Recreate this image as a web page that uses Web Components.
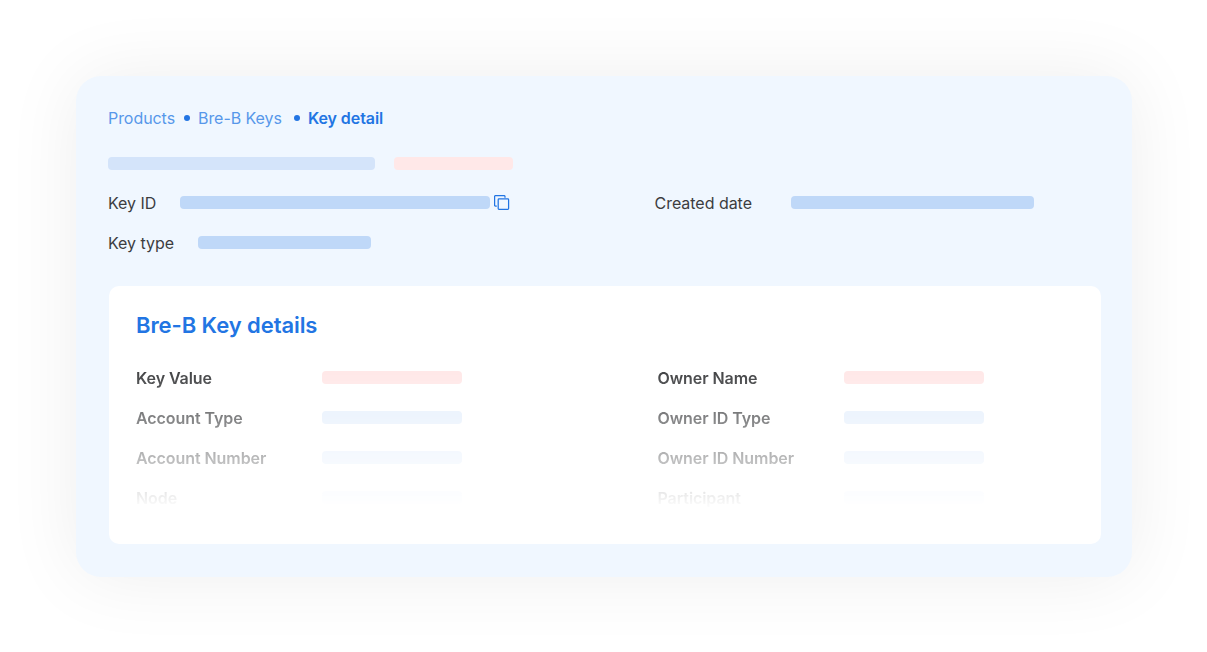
<!DOCTYPE html>
<html lang="en">
<head>
<meta charset="utf-8">
<title>Key detail</title>
<style>
    body {
        margin: 0;
        background: #fff;
        font-family: Inter, "Liberation Sans", sans-serif;
        font-size: 16px;
        line-height: 20px;
        color: #3c3d3f;
    }
</style>
</head>
<body>
<key-page></key-page>
<script>
class SkeletonBar extends HTMLElement {
    constructor() {
        super();
        this.attachShadow({ mode: 'open' });
        this.shadowRoot.innerHTML = `
            <style>
                :host {
                    display: block;
                    flex: none;
                    width: var(--bar-width, 140px);
                    height: 13px;
                    border-radius: 4px;
                    background: #bfd8f8;
                }
                :host([tone="soft"]) { background: #d4e4fa; }
                :host([tone="pale"]) { background: #e5effc; }
                :host([tone="pink"]) { background: #ffe8e8; }
            </style>
        `;
    }
}

class BreadCrumbs extends HTMLElement {
    constructor() {
        super();
        this.attachShadow({ mode: 'open' });
        this.shadowRoot.innerHTML = `
            <style>
                :host {
                    display: flex;
                    align-items: center;
                    height: 20px;
                    color: #5797ea;
                    letter-spacing: -0.06px;
                }
                i {
                    width: 6px;
                    height: 6px;
                    margin: 0 8px 0 9px;
                    border-radius: 50%;
                    background: #2275e3;
                }
                i.last { margin: 0 8px 0 12px; }
                b { font-weight: 600; color: #2275e3; }
            </style>
            <span><slot name="root"></slot></span><i></i>
            <span><slot name="section"></slot></span><i class="last"></i>
            <b><slot name="current"></slot></b>
        `;
    }
}

class CopyIcon extends HTMLElement {
    constructor() {
        super();
        this.attachShadow({ mode: 'open' });
        this.shadowRoot.innerHTML = `
            <style>
                :host { display: block; width: 16px; height: 16px; margin-left: 4px; }
                svg { display: block; }
            </style>
            <svg width="16" height="16" viewBox="0 0 16 16" fill="none" stroke="#2275e3" stroke-width="1.25">
                <path d="M2.8 11H1.5Q.6 11 .6 10.1V1.5Q.6 .6 1.5 .6H10.1Q11 .6 11 1.5V2.8"/>
                <rect x="4.2" y="3.9" width="10.4" height="10.5" rx=".8"/>
            </svg>
        `;
    }
}

class SummaryField extends HTMLElement {
    constructor() {
        super();
        this.attachShadow({ mode: 'open' });
        this.shadowRoot.innerHTML = `
            <style>
                :host {
                    display: flex;
                    align-items: center;
                    height: 40px;
                }
                span { width: var(--label-width); letter-spacing: -0.03px; }
                ::slotted(skeleton-bar) { margin-bottom: 1px; }
            </style>
            <span><slot name="label"></slot></span>
            <slot></slot>
        `;
    }
}

class DetailRow extends HTMLElement {
    constructor() {
        super();
        this.attachShadow({ mode: 'open' });
    }

    connectedCallback() {
        this.shadowRoot.innerHTML = `
            <style>
                :host {
                    display: flex;
                    align-items: center;
                    height: 40px;
                    font-weight: 600;
                    letter-spacing: -0.07px;
                    color: #434446;
                }
                span { width: 186px; }
                skeleton-bar { margin-bottom: 1px; }
            </style>
            <span><slot></slot></span>
            <skeleton-bar tone="${this.getAttribute('tone') || 'pale'}"></skeleton-bar>
        `;
    }
}

class DetailsCard extends HTMLElement {
    constructor() {
        super();
        this.attachShadow({ mode: 'open' });
        this.shadowRoot.innerHTML = `
            <style>
                :host {
                    display: block;
                    box-sizing: border-box;
                    height: 258px;
                    padding: 24px 27px 0;
                    border-radius: 10px;
                    background: #fff;
                }
                h2 {
                    margin: 0 0 18px;
                    font-size: 22px;
                    line-height: 30px;
                    font-weight: 600;
                    letter-spacing: -0.07px;
                    color: #2275e3;
                }
                /* rows fade out towards the bottom of the card */
                .rows {
                    display: grid;
                    grid-template-columns: 521.5px 1fr;
                    height: 160px;
                    -webkit-mask-image: linear-gradient(#000 14px, transparent 151px);
                    mask-image: linear-gradient(#000 14px, transparent 151px);
                }
            </style>
            <h2><slot name="title"></slot></h2>
            <div class="rows">
                <div><slot name="account"></slot></div>
                <div><slot name="owner"></slot></div>
            </div>
        `;
    }
}

class KeyPage extends HTMLElement {
    constructor() {
        super();
        this.attachShadow({ mode: 'open' });
        this.shadowRoot.innerHTML = `
            <style>
                :host {
                    display: block;
                    box-sizing: border-box;
                    height: 652px;
                    padding: 76px 75px 0 76px;
                    overflow: hidden;
                }
                main {
                    box-sizing: border-box;
                    height: 501px;
                    padding: 32px 31px 0 32px;
                    border-radius: 25px;
                    background: #f0f7ff;
                    box-shadow: 0 0 76px rgba(0, 0, 0, 0.07);
                }
                .heading {
                    display: flex;
                    gap: 19.5px;
                    margin: 29px 0 13px;
                }
                .summary {
                    display: grid;
                    grid-template-columns: 546.5px 1fr;
                    margin-bottom: 23px;
                }
                details-card { margin-left: 1px; }
            </style>
            <main>
                <bread-crumbs>
                    <span slot="root">Products</span>
                    <span slot="section">Bre-B Keys</span>
                    <span slot="current">Key detail</span>
                </bread-crumbs>
                <div class="heading">
                    <skeleton-bar tone="soft" style="--bar-width: 266.5px"></skeleton-bar>
                    <skeleton-bar tone="pink" style="--bar-width: 119px"></skeleton-bar>
                </div>
                <div class="summary">
                    <summary-field style="--label-width: 72px">
                        <span slot="label">Key ID</span>
                        <skeleton-bar style="--bar-width: 310px"></skeleton-bar>
                        <copy-icon></copy-icon>
                    </summary-field>
                    <summary-field style="--label-width: 136.5px">
                        <span slot="label">Created date</span>
                        <skeleton-bar style="--bar-width: 242.5px"></skeleton-bar>
                    </summary-field>
                    <summary-field style="--label-width: 90px">
                        <span slot="label">Key type</span>
                        <skeleton-bar style="--bar-width: 172.5px"></skeleton-bar>
                    </summary-field>
                </div>
                <details-card>
                    <span slot="title">Bre-B Key details</span>
                    <detail-row slot="account" tone="pink">Key Value</detail-row>
                    <detail-row slot="account">Account Type</detail-row>
                    <detail-row slot="account">Account Number</detail-row>
                    <detail-row slot="account">Node</detail-row>
                    <detail-row slot="owner" tone="pink">Owner Name</detail-row>
                    <detail-row slot="owner">Owner ID Type</detail-row>
                    <detail-row slot="owner">Owner ID Number</detail-row>
                    <detail-row slot="owner">Participant</detail-row>
                </details-card>
            </main>
        `;
    }
}

customElements.define('skeleton-bar', SkeletonBar);
customElements.define('bread-crumbs', BreadCrumbs);
customElements.define('copy-icon', CopyIcon);
customElements.define('summary-field', SummaryField);
customElements.define('detail-row', DetailRow);
customElements.define('details-card', DetailsCard);
customElements.define('key-page', KeyPage);
</script>
</body>
</html>
